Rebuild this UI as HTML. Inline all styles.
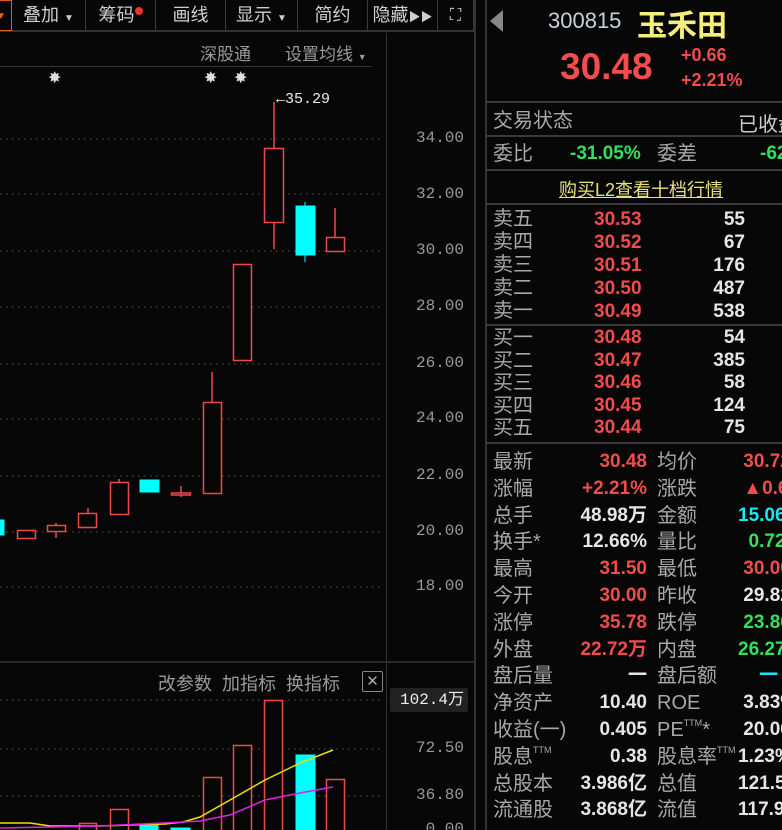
<!DOCTYPE html>
<html><head><meta charset="utf-8"><style>
*{margin:0;padding:0;box-sizing:border-box}
html,body{width:782px;height:830px;overflow:hidden}
body{background:#070707;position:relative;font-family:"Liberation Sans","Noto Sans CJK SC",sans-serif;color:#d8d8d8}
.a{position:absolute;white-space:nowrap}
.tb{position:absolute;top:0;height:31px;border-right:1px solid #3a3a3a;color:#cfcfcf;font-size:18px;line-height:31px;text-align:center;white-space:nowrap}
.ax{position:absolute;left:400px;width:64px;text-align:right;color:#9a9a9a;font-family:"Liberation Mono",monospace;font-size:16px}
.lb{position:absolute;left:493px;color:#a8a8a8;font-size:20px;line-height:22px;white-space:nowrap}
.v{position:absolute;text-align:right;font-weight:bold;font-size:19px;line-height:22px;white-space:nowrap}
.r{color:#f24c4c}.w{color:#e6e6e6}.g{color:#34e05a}.c{color:#19e8f0}
.hl{position:absolute;left:486px;right:0;height:2px;background:#3a3a3a}
.sp{display:inline-block;font-size:9px;line-height:0;vertical-align:top;position:relative;top:6px}
</style></head><body>
<div class="a" style="left:0;top:0;width:474px;height:32px;border-bottom:2px solid #333"></div>
<div class="tb" style="left:-10px;width:22px;border:1px solid #e0601c;color:#e0601c;font-size:10px">▼</div>
<div class="tb" style="left:12px;width:74px">叠加 <span style="font-size:10px">▼</span></div>
<div class="tb" style="left:86px;width:70px">筹码<span style="display:inline-block;width:8px;height:8px;border-radius:4px;background:#f03030;vertical-align:top;margin-top:7px"></span></div>
<div class="tb" style="left:156px;width:70px">画线</div>
<div class="tb" style="left:226px;width:72px">显示 <span style="font-size:10px">▼</span></div>
<div class="tb" style="left:298px;width:70px">简约</div>
<div class="tb" style="left:368px;width:70px">隐藏<span style="font-size:12px">▶▶</span></div>
<div class="tb" style="left:438px;width:36px;font-size:16px">⛶</div>
<div class="a" style="left:474px;top:0;width:2px;height:830px;background:#333"></div>
<div class="a" style="left:485px;top:0;width:2px;height:830px;background:#333"></div>
<div class="a" style="left:386px;top:33px;width:1px;height:797px;background:#333"></div>
<div class="a" style="left:200px;top:40px;color:#9a9a9a;font-size:17px">深股通</div>
<div class="a" style="left:285px;top:40px;color:#9a9a9a;font-size:17px">设置均线 <span style="font-size:9px">▼</span></div>
<div class="a" style="left:0;top:66px;width:372px;height:1px;background:#333"></div>
<div class="a" style="left:48px;top:68px;color:#ddd;font-size:16px">✸</div>
<div class="a" style="left:204px;top:68px;color:#ddd;font-size:16px">✸</div>
<div class="a" style="left:234px;top:68px;color:#ddd;font-size:16px">✸</div>
<div class="a" style="left:276px;top:91px;color:#eee;font-family:'Liberation Mono',monospace;font-size:15px">←35.29</div>
<div class="ax" style="top:129px">34.00</div><div class="ax" style="top:185px">32.00</div>
<div class="ax" style="top:241px">30.00</div><div class="ax" style="top:297px">28.00</div>
<div class="ax" style="top:354px">26.00</div><div class="ax" style="top:409px">24.00</div>
<div class="ax" style="top:466px">22.00</div><div class="ax" style="top:522px">20.00</div>
<div class="ax" style="top:577px">18.00</div>
<div class="a" style="left:390px;top:688px;width:78px;height:24px;background:#222;border-radius:2px;color:#eee;font-size:16px;text-align:right;padding-right:4px;line-height:24px;font-family:'Liberation Mono','Noto Sans CJK SC',monospace">102.4万</div>
<div class="ax" style="top:739px">72.50</div><div class="ax" style="top:786px">36.80</div><div class="ax" style="top:820px">0.00</div>
<div class="a" style="left:0;top:661px;width:474px;height:2px;background:#2a2a2a"></div>
<div class="a" style="left:158px;top:670px;color:#9a9a9a;font-size:18px">改参数&nbsp;&nbsp;加指标&nbsp;&nbsp;换指标</div>
<div class="a" style="left:362px;top:671px;width:21px;height:21px;border:1px solid #888;border-radius:2px;color:#aaa;font-size:15px;text-align:center;line-height:19px">✕</div>
<svg class="a" style="left:0;top:0" width="386" height="830">
<g stroke="#555" stroke-dasharray="1.5 4.5" stroke-width="1">
<line x1="0" x2="384" y1="139" y2="139"/><line x1="0" x2="384" y1="194" y2="194"/><line x1="0" x2="384" y1="251" y2="251"/><line x1="0" x2="384" y1="307" y2="307"/><line x1="0" x2="384" y1="364" y2="364"/><line x1="0" x2="384" y1="419" y2="419"/><line x1="0" x2="384" y1="476" y2="476"/><line x1="0" x2="384" y1="532" y2="532"/><line x1="0" x2="384" y1="587" y2="587"/>
<line x1="0" x2="384" y1="700" y2="700"/><line x1="0" x2="384" y1="749" y2="749"/><line x1="0" x2="384" y1="796" y2="796"/>
</g>
<g stroke="#f04848" stroke-width="1.5" fill="#070707">
<rect x="17.5" y="530.5" width="18" height="8"/>
<line x1="56" y1="523" x2="56" y2="538"/><rect x="47.5" y="525.5" width="18" height="6"/>
<line x1="88" y1="508" x2="88" y2="514"/><rect x="78.5" y="513.5" width="18" height="14"/>
<line x1="119" y1="479" x2="119" y2="483"/><rect x="110.5" y="482.5" width="18" height="32"/>
<line x1="181" y1="486" x2="181" y2="497"/><rect x="171.5" y="493" width="19" height="2"/>
<line x1="212" y1="372" x2="212" y2="402"/><rect x="203.5" y="402.5" width="18" height="91"/>
<rect x="233.5" y="264.5" width="18" height="96"/>
<line x1="274" y1="102" x2="274" y2="249"/><rect x="264.5" y="148.5" width="19" height="74"/>
<line x1="335" y1="208" x2="335" y2="238"/><rect x="326.5" y="237.5" width="18" height="14"/>
<rect x="79.5" y="823.5" width="17" height="10"/><rect x="110.5" y="809.5" width="18" height="24"/>
<rect x="203.5" y="777.5" width="18" height="56"/><rect x="233.5" y="745.5" width="18" height="88"/>
<rect x="264.5" y="700.5" width="18" height="133"/><rect x="326.5" y="779.5" width="18" height="54"/>
</g>
<g fill="#00ffff" stroke="#00ffff">
<rect x="-2" y="520" width="6" height="15"/>
<rect x="140" y="480" width="19" height="12"/>
<line x1="305" y1="202" x2="305" y2="262"/><rect x="296" y="206" width="19" height="49"/>
<rect x="140" y="825" width="18" height="8"/><rect x="171" y="828" width="19" height="5"/><rect x="296" y="755" width="19" height="78"/>
</g>
<polyline fill="none" stroke="#f0e000" stroke-width="1.5" points="0,823 30,823 50,826 100,826 165,824 183,822 200,817 230,800 265,780 300,763 333,750"/>
<polyline fill="none" stroke="#e020e0" stroke-width="1.5" points="0,828 100,826 183,822 200,821 230,815 265,800 300,793 333,787"/>
</svg>
<div class="a" style="left:490px;top:10px;width:0;height:0;border-top:11px solid transparent;border-bottom:11px solid transparent;border-right:13px solid #888"></div>
<div class="a" style="left:548px;top:8px;color:#c8d0dc;font-size:22px">300815</div>
<div class="a" style="left:637px;top:1px;color:#f4ee7a;font-size:30px;font-weight:bold">玉禾田</div>
<div class="a r" style="left:560px;top:46px;font-size:37px;font-weight:bold">30.48</div>
<div class="a r" style="left:681px;top:45px;font-size:18px;font-weight:bold">+0.66</div>
<div class="a r" style="left:681px;top:70px;font-size:18px;font-weight:bold">+2.21%</div>
<div class="hl" style="top:101px"></div>
<div class="lb" style="top:110px">交易状态</div><div class="a" style="left:738px;top:108px;color:#ccc;font-size:20px">已收盘</div>
<div class="hl" style="top:135px"></div>
<div class="lb" style="top:143px">委比</div><div class="v g" style="left:570px;top:143px">-31.05%</div>
<div class="lb" style="left:657px;top:143px">委差</div><div class="v g" style="left:760px;top:143px;text-align:left">-62</div>
<div class="hl" style="top:169px"></div>
<div class="a" style="left:559px;top:176px;color:#e8e07a;font-size:18px;text-decoration:underline">购买L2查看十档行情</div>
<div class="hl" style="top:203px"></div>
<div class="lb" style="top:208px;line-height:23px">卖五<br>卖四<br>卖三<br>卖二<br>卖一</div>
<div class="v r" style="left:594px;top:208px;text-align:left;line-height:23px">30.53<br>30.52<br>30.51<br>30.50<br>30.49</div>
<div class="v w" style="left:680px;width:65px;top:208px;line-height:23px">55<br>67<br>176<br>487<br>538</div>
<div class="hl" style="top:324px"></div>
<div class="lb" style="top:327px;line-height:22.5px">买一<br>买二<br>买三<br>买四<br>买五</div>
<div class="v r" style="left:594px;top:327px;text-align:left;line-height:22.5px">30.48<br>30.47<br>30.46<br>30.45<br>30.44</div>
<div class="v w" style="left:680px;width:65px;top:327px;line-height:22.5px">54<br>385<br>58<br>124<br>75</div>
<div class="hl" style="top:442px"></div>
<div class="lb" style="top:449px;line-height:26.8px">最新<br>涨幅<br>总手<br>换手*<br>最高<br>今开<br>涨停<br>外盘<br>盘后量<br>净资产<br>收益(一)<br>股息<span class="sp">TTM</span><br>总股本<br>流通股</div>
<div class="v" style="left:540px;width:107px;top:449px;line-height:26.8px"><span class="r">30.48</span><br><span class="r">+2.21%</span><br><span class="w">48.98万</span><br><span class="w">12.66%</span><br><span class="r">31.50</span><br><span class="r">30.00</span><br><span class="r">35.78</span><br><span class="r">22.72万</span><br><span class="w">一</span><br><span class="w">10.40</span><br><span class="w">0.405</span><br><span class="w">0.38</span><br><span class="w">3.986亿</span><br><span class="w">3.868亿</span></div>
<div class="lb" style="left:657px;top:449px;line-height:26.8px">均价<br>涨跌<br>金额<br>量比<br>最低<br>昨收<br>跌停<br>内盘<br>盘后额<br>ROE<br>PE<span class="sp">TTM</span>*<br>股息率<span class="sp">TTM</span><br>总值<br>流值</div>
<div class="v" style="left:738px;width:100px;top:449px;text-align:left;line-height:26.8px"><span class="r">&nbsp;30.72</span><br><span class="r">&nbsp;▲0.66</span><br><span class="c">15.06亿</span><br><span class="g">&nbsp;&nbsp;0.72</span><br><span class="r">&nbsp;30.00</span><br><span class="w">&nbsp;29.82</span><br><span class="g">&nbsp;23.86</span><br><span class="g">26.27万</span><br><span class="c">&nbsp;&nbsp;&nbsp;&nbsp;一</span><br><span class="w">&nbsp;3.83%</span><br><span class="w">&nbsp;20.06</span><br><span class="w">1.23%</span><br><span class="w">121.5亿</span><br><span class="w">117.9亿</span></div>
</body></html>
